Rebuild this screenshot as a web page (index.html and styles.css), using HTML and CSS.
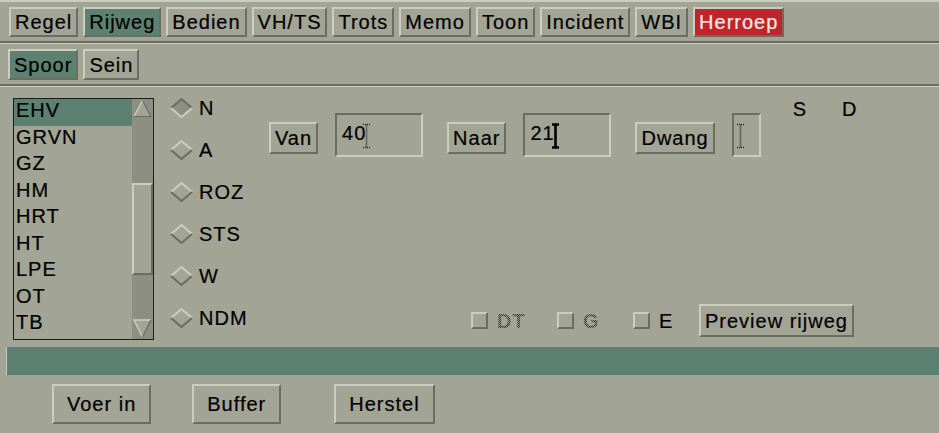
FILE: index.html
```html
<!DOCTYPE html>
<html lang="nl">
<head>
<meta charset="utf-8">
<title>Rijweg</title>
<link rel="stylesheet" href="styles.css">
</head>
<body>
<div class="app">
  <nav class="bar bar-top">
    <button class="btn">Regel</button>
    <button class="btn btn-on">Rijweg</button>
    <button class="btn">Bedien</button>
    <button class="btn">VH/TS</button>
    <button class="btn">Trots</button>
    <button class="btn">Memo</button>
    <button class="btn">Toon</button>
    <button class="btn">Incident</button>
    <button class="btn">WBI</button>
    <button class="btn btn-alert">Herroep</button>
  </nav>
  <nav class="bar bar-sub">
    <button class="btn btn-on">Spoor</button>
    <button class="btn">Sein</button>
  </nav>
  <main class="main">
    <div class="work">
      <div class="listbox">
        <ul class="list">
          <li class="item item-sel">EHV</li>
          <li class="item">GRVN</li>
          <li class="item">GZ</li>
          <li class="item">HM</li>
          <li class="item">HRT</li>
          <li class="item">HT</li>
          <li class="item">LPE</li>
          <li class="item">OT</li>
          <li class="item">TB</li>
        </ul>
        <div class="scrollbar">
          <div class="sb-arrow sb-up">
            <svg viewBox="0 0 21 19" width="21" height="19"><polygon points="10.5,1.5 19,17.5 2,17.5" fill="#a2a495"/><path d="M2 17.5 L10.5 1.5" stroke="#cbcdbf" stroke-width="1.5" fill="none"/><path d="M10.5 1.5 L19 17.5 L2 17.5" stroke="#6b6d62" stroke-width="1.2" fill="none"/></svg>
          </div>
          <div class="sb-track"><div class="sb-thumb"></div></div>
          <div class="sb-arrow sb-down">
            <svg viewBox="0 0 21 21" width="21" height="21"><polygon points="2,2 19,2 10.5,19" fill="#a2a495"/><path d="M10.5 19 L2 2 L19 2" stroke="#cbcdbf" stroke-width="1.5" fill="none"/><path d="M19 2 L10.5 19" stroke="#6b6d62" stroke-width="1.2" fill="none"/></svg>
          </div>
        </div>
      </div>

      <div class="radios">
        <label class="radio">
          <svg class="diamond" viewBox="0 0 23 20"><polygon points="1,10 11.5,1 22,10 11.5,19" fill="#8d8f82"/><path d="M1 10 L11.5 1 L22 10" fill="none" stroke="#6b6d62" stroke-width="2"/><path d="M1 10 L11.5 19 L22 10" fill="none" stroke="#cbcdbf" stroke-width="2"/></svg>
          <span>N</span>
        </label>
        <label class="radio">
          <svg class="diamond" viewBox="0 0 23 20"><path d="M1 10 L11.5 1 L22 10" fill="none" stroke="#cbcdbf" stroke-width="2"/><path d="M1 10 L11.5 19 L22 10" fill="none" stroke="#6b6d62" stroke-width="2"/></svg>
          <span>A</span>
        </label>
        <label class="radio">
          <svg class="diamond" viewBox="0 0 23 20"><path d="M1 10 L11.5 1 L22 10" fill="none" stroke="#cbcdbf" stroke-width="2"/><path d="M1 10 L11.5 19 L22 10" fill="none" stroke="#6b6d62" stroke-width="2"/></svg>
          <span>ROZ</span>
        </label>
        <label class="radio">
          <svg class="diamond" viewBox="0 0 23 20"><path d="M1 10 L11.5 1 L22 10" fill="none" stroke="#cbcdbf" stroke-width="2"/><path d="M1 10 L11.5 19 L22 10" fill="none" stroke="#6b6d62" stroke-width="2"/></svg>
          <span>STS</span>
        </label>
        <label class="radio">
          <svg class="diamond" viewBox="0 0 23 20"><path d="M1 10 L11.5 1 L22 10" fill="none" stroke="#cbcdbf" stroke-width="2"/><path d="M1 10 L11.5 19 L22 10" fill="none" stroke="#6b6d62" stroke-width="2"/></svg>
          <span>W</span>
        </label>
        <label class="radio">
          <svg class="diamond" viewBox="0 0 23 20"><path d="M1 10 L11.5 1 L22 10" fill="none" stroke="#cbcdbf" stroke-width="2"/><path d="M1 10 L11.5 19 L22 10" fill="none" stroke="#6b6d62" stroke-width="2"/></svg>
          <span>NDM</span>
        </label>
      </div>

      <div class="panel">
        <div class="panel-top">
          <div class="fields">
            <div class="pair">
              <button class="btn btn-mid">Van</button>
              <div class="field field-wide">40<svg class="caret" viewBox="0 0 9 26"><path d="M1 1.5h7M4.5 1.5v23M1 24.5h7" stroke="#2a2a26" stroke-width="1.6" stroke-dasharray="1 1" fill="none"/></svg></div>
            </div>
            <div class="pair">
              <button class="btn btn-mid">Naar</button>
              <div class="field field-wide">21<svg class="caret" viewBox="0 0 9 26"><path d="M1 1.5h7M4.5 1.5v23M1 24.5h7" stroke="#000" stroke-width="2.6" fill="none"/></svg></div>
            </div>
            <div class="pair">
              <button class="btn btn-mid">Dwang</button>
              <div class="field field-narrow"><svg class="caret" viewBox="0 0 9 26"><path d="M1 1.5h7M4.5 1.5v23M1 24.5h7" stroke="#2a2a26" stroke-width="1.6" stroke-dasharray="1 1" fill="none"/></svg></div>
            </div>
          </div>
          <div class="sd"><span>S</span><span>D</span></div>
        </div>
        <div class="checks">
          <label class="check check-dt"><span class="box"></span><span class="dis">DT</span></label>
          <label class="check check-g"><span class="box"></span><span class="dis">G</span></label>
          <label class="check check-e"><span class="box"></span><span>E</span></label>
          <button class="btn btn-preview">Preview rijweg</button>
        </div>
      </div>
    </div>
    <div class="status"></div>
    <div class="actions">
      <button class="btn btn-big">Voer in</button>
      <button class="btn btn-big act-buffer">Buffer</button>
      <button class="btn btn-big act-herstel">Herstel</button>
    </div>
  </main>
</div>
</body>
</html>
```

FILE: styles.css
```css
:root {
  --bg: #a2a495;
  --light: #cbcdbf;
  --dark: #6b6d62;
  --trough: #8d8f82;
  --green: #5c8170;
  --red: #c1252b;
}

* { box-sizing: border-box; }

html, body { margin: 0; padding: 0; }

body {
  width: 939px;
  height: 433px;
  overflow: hidden;
  background: var(--bg);
  color: #000;
  font-family: "Liberation Sans", Arial, sans-serif;
  font-size: 20px;
  letter-spacing: 1px;
  -webkit-text-stroke-width: 0.2px;
}

.bar {
  display: flex;
  gap: 5px;
}

.bar-top {
  border-top: 2px solid var(--light);
  border-bottom: 2px solid var(--dark);
  padding: 5px 0 4px 9px;
}

.bar-sub {
  border-top: 1px solid var(--light);
  border-bottom: 2px solid var(--dark);
  padding: 5px 0 4px 8px;
}

.btn {
  font: inherit;
  letter-spacing: inherit;
  color: #000;
  background: var(--bg);
  border: 2px solid;
  border-color: var(--light) var(--dark) var(--dark) var(--light);
  padding: 0 4px;
  margin: 0;
  height: 30px;
  line-height: 24px;
  white-space: nowrap;
  cursor: default;
}

.bar-sub .btn { height: 31px; }

.btn-on { background: var(--green); }

.btn-alert {
  background: var(--red);
  color: #f3e9e6;
}

.main {
  border-top: 1px solid var(--light);
  padding-top: 11px;
}

.work {
  display: flex;
  height: 242px;
  padding-left: 13px;
}

/* list */
.listbox {
  display: flex;
  width: 141px;
  height: 242px;
  border: 1px solid #1c1c1a;
}

.list {
  list-style: none;
  margin: 0;
  padding: 0;
  width: 118px;
}

.item {
  height: 26.5px;
  line-height: 22.5px;
  padding-left: 2px;
}

.item-sel { background: var(--green); }

.scrollbar {
  width: 21px;
  display: flex;
  flex-direction: column;
  background: var(--trough);
}

.sb-arrow svg { display: block; }
.sb-up { height: 19px; }
.sb-down { height: 21px; }

.sb-track {
  flex: 1;
  padding-top: 65px;
}

.sb-thumb {
  height: 92px;
  background: var(--bg);
  border: 2px solid;
  border-color: var(--light) var(--dark) var(--dark) var(--light);
}

/* radios */
.radios {
  width: 80px;
  margin-left: 16px;
  display: flex;
  flex-direction: column;
  gap: 22px;
}

.radio {
  display: flex;
  align-items: center;
  gap: 6px;
  height: 20px;
  line-height: 20px;
}

.diamond {
  width: 23px;
  height: 20px;
  flex: none;
}

/* right panel */
.panel {
  flex: 1;
  display: flex;
  flex-direction: column;
  justify-content: space-between;
  padding-bottom: 3px;
}

.panel-top {
  display: flex;
  align-items: flex-start;
  padding-left: 19px;
}

.fields {
  display: flex;
  align-items: flex-start;
  gap: 24px;
  margin-top: 15px;
}

.pair {
  display: flex;
  align-items: flex-start;
  gap: 17px;
}

.btn-mid {
  height: 32px;
  margin-top: 9px;
}

.field {
  height: 44px;
  border: 2px solid;
  border-color: var(--dark) var(--light) var(--light) var(--dark);
  padding: 8px 5px 6px;
  line-height: 20px;
  white-space: nowrap;
  display: flex;
  align-items: flex-start;
}

.field-wide { width: 88px; }
.field-narrow { width: 29px; padding-left: 2px; }

.caret {
  width: 9px;
  height: 26px;
  margin-left: -4px;
  flex: none;
}

.field-narrow .caret { margin-left: 0; }

.sd {
  display: flex;
  gap: 35px;
  margin-left: 32px;
  margin-top: 1px;
  line-height: 20px;
}

.checks {
  display: flex;
  align-items: center;
  padding-left: 221px;
}

.check {
  display: flex;
  align-items: center;
  gap: 9px;
  line-height: 20px;
}

.check-dt { width: 86px; }
.check-g { width: 76px; }
.check-e { width: 66px; }

.box {
  width: 17px;
  height: 17px;
  border: 2px solid;
  border-color: var(--light) var(--dark) var(--dark) var(--light);
}

.dis {
  color: transparent;
  -webkit-text-stroke-width: 0;
  font-weight: bold;
  background: repeating-conic-gradient(#2c2c28 0 25%, transparent 0 50%) 0 0 / 2px 2px;
  -webkit-background-clip: text;
  background-clip: text;
}

.btn-preview { height: 33px; }

/* bottom */
.status {
  height: 28px;
  margin: 7px 0 0 6px;
  background: var(--green);
  border-left: 1px solid var(--light);
}

.actions {
  display: flex;
  padding-left: 52px;
  margin-top: 9px;
}

.btn-big {
  height: 40px;
  padding: 0 13px;
}

.act-buffer { margin-left: 41px; }
.act-herstel { margin-left: 53px; }
```
